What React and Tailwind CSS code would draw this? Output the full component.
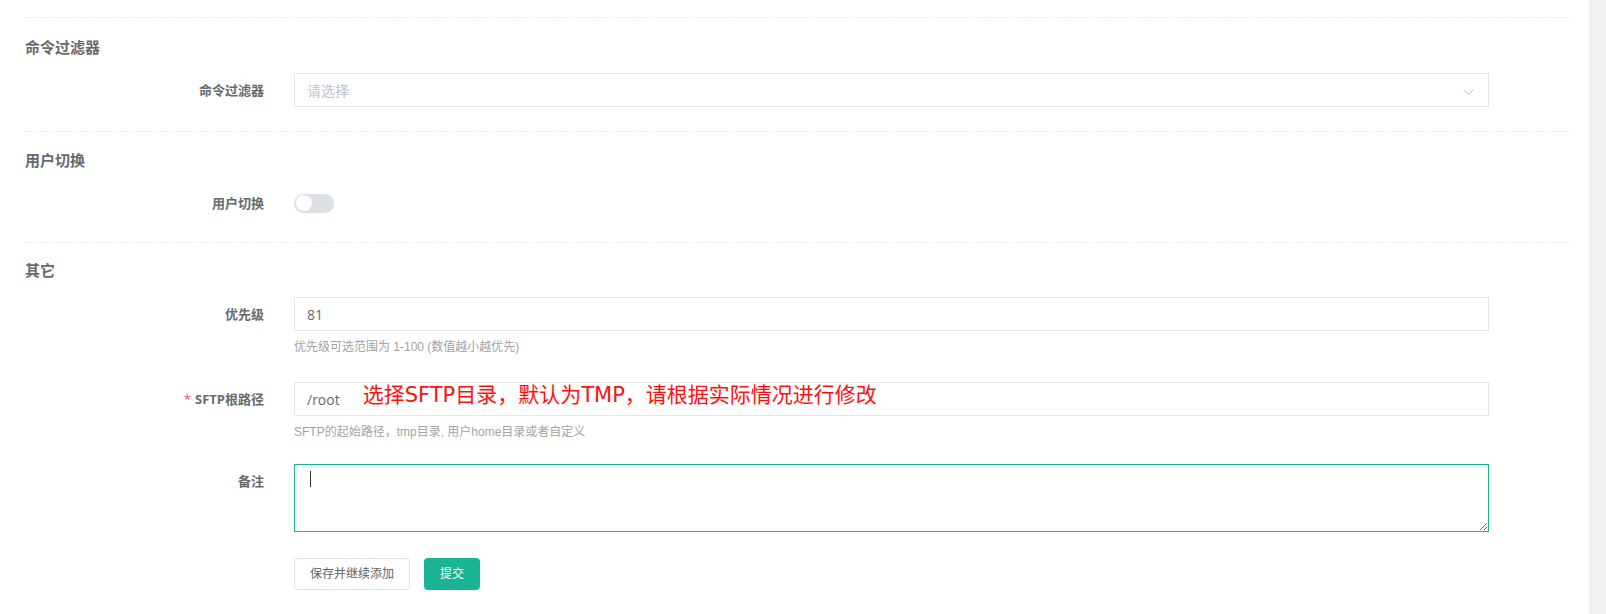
function Divider({ className = "" }) {
    return <div className={`border-t border-dashed border-[#e7eaec] ${className}`}></div>;
}

function SectionTitle({ children, className = "" }) {
    return <h3 className={`text-[15px] font-bold leading-[20px] ${className}`}>{children}</h3>;
}

function Row({ label, required, className = "", children }) {
    return (
        <div className={`flex items-start ${className}`}>
            <label className="w-[239px] shrink-0 text-right text-[13px] font-bold leading-[20px] pt-[7px]">
                {required && <span className="text-[#ed5565] font-normal mr-[4px]">*</span>}
                {label}
            </label>
            <div className="ml-[30px] w-[1195px]">{children}</div>
        </div>
    );
}

function HelpText({ children }) {
    return (
        <p className="mt-[8px] text-[12px] leading-[17px] text-[#a3a3a3] font-['Liberation_Sans','Noto_Sans_CJK_SC',sans-serif]">
            {children}
        </p>
    );
}

export default function App() {
    return (
        <div className="flex min-h-screen bg-white text-[#676a6c] font-['Open_Sans','Noto_Sans_CJK_SC',sans-serif]">
            <div className="flex-1 pl-[25px] pr-[20px] pt-[17px]">
                {/* 命令过滤器 */}
                <Divider />
                <SectionTitle className="mt-[19px]">命令过滤器</SectionTitle>
                <Row label="命令过滤器" className="mt-[16px]">
                    <div className="h-[34px] border border-[#e5e6e7] flex items-center justify-between pl-[12px] pr-[14px]">
                        <span className="text-[14px] text-[#c0c4cc]">请选择</span>
                        <svg width="11" height="7" viewBox="0 0 11 7" className="mt-[4px]">
                            <polyline points="0.5,0.5 5.5,5.5 10.5,0.5" fill="none" stroke="#c0c4cc" strokeWidth="1" />
                        </svg>
                    </div>
                </Row>

                {/* 用户切换 */}
                <Divider className="mt-[24px]" />
                <SectionTitle className="mt-[18px]">用户切换</SectionTitle>
                <Row label="用户切换" className="mt-[16px]">
                    <div className="h-[34px] flex items-center">
                        <div className="w-[40px] h-[19px] rounded-full bg-[#dcdfe6] flex items-center pl-[2px]">
                            <div className="w-[16px] h-[16px] rounded-full bg-white"></div>
                        </div>
                    </div>
                </Row>

                {/* 其它 */}
                <Divider className="mt-[22px]" />
                <SectionTitle className="mt-[17px]">其它</SectionTitle>
                <Row label="优先级" className="mt-[17px]">
                    <div className="h-[34px] border border-[#e5e6e7] flex items-center px-[12px] text-[14px] text-[#676a6c]">81</div>
                    <HelpText>优先级可选范围为 1-100 (数值越小越优先)</HelpText>
                </Row>
                <Row label="SFTP根路径" required className="mt-[26px]">
                    <div className="h-[34px] border border-[#e5e6e7] flex items-center px-[12px] text-[14px] text-[#676a6c]">
                        <span>/root</span>
                        <span className="ml-[23px] -mt-[8px] text-[21px] leading-[21px] text-[#ff1010] font-['DejaVu_Sans','Noto_Sans_CJK_SC',sans-serif] whitespace-nowrap">
                            选择SFTP目录，默认为TMP，请根据实际情况进行修改
                        </span>
                    </div>
                    <HelpText>SFTP的起始路径，tmp目录, 用户home目录或者自定义</HelpText>
                </Row>
                <Row label="备注" className="mt-[23px]">
                    <div className="relative">
                        <textarea className="block w-full h-[68px] border border-[#1ab394] outline-none px-[12px] py-[6px] text-[14px]"></textarea>
                        <span className="absolute left-[16px] top-[7px] w-[1px] h-[16px] bg-[#333]"></span>
                    </div>
                </Row>
                <div className="flex ml-[269px] mt-[26px] gap-[14px]">
                    <button className="h-[32px] px-[15px] rounded-[4px] border border-[#dcdfe6] bg-white text-[12px] text-[#606266]">保存并继续添加</button>
                    <button className="h-[32px] px-[16px] rounded-[4px] bg-[#1ab394] text-[12px] text-white">提交</button>
                </div>
            </div>
            <div className="w-[17px] bg-[#f1f1f1]"></div>
        </div>
    );
}
